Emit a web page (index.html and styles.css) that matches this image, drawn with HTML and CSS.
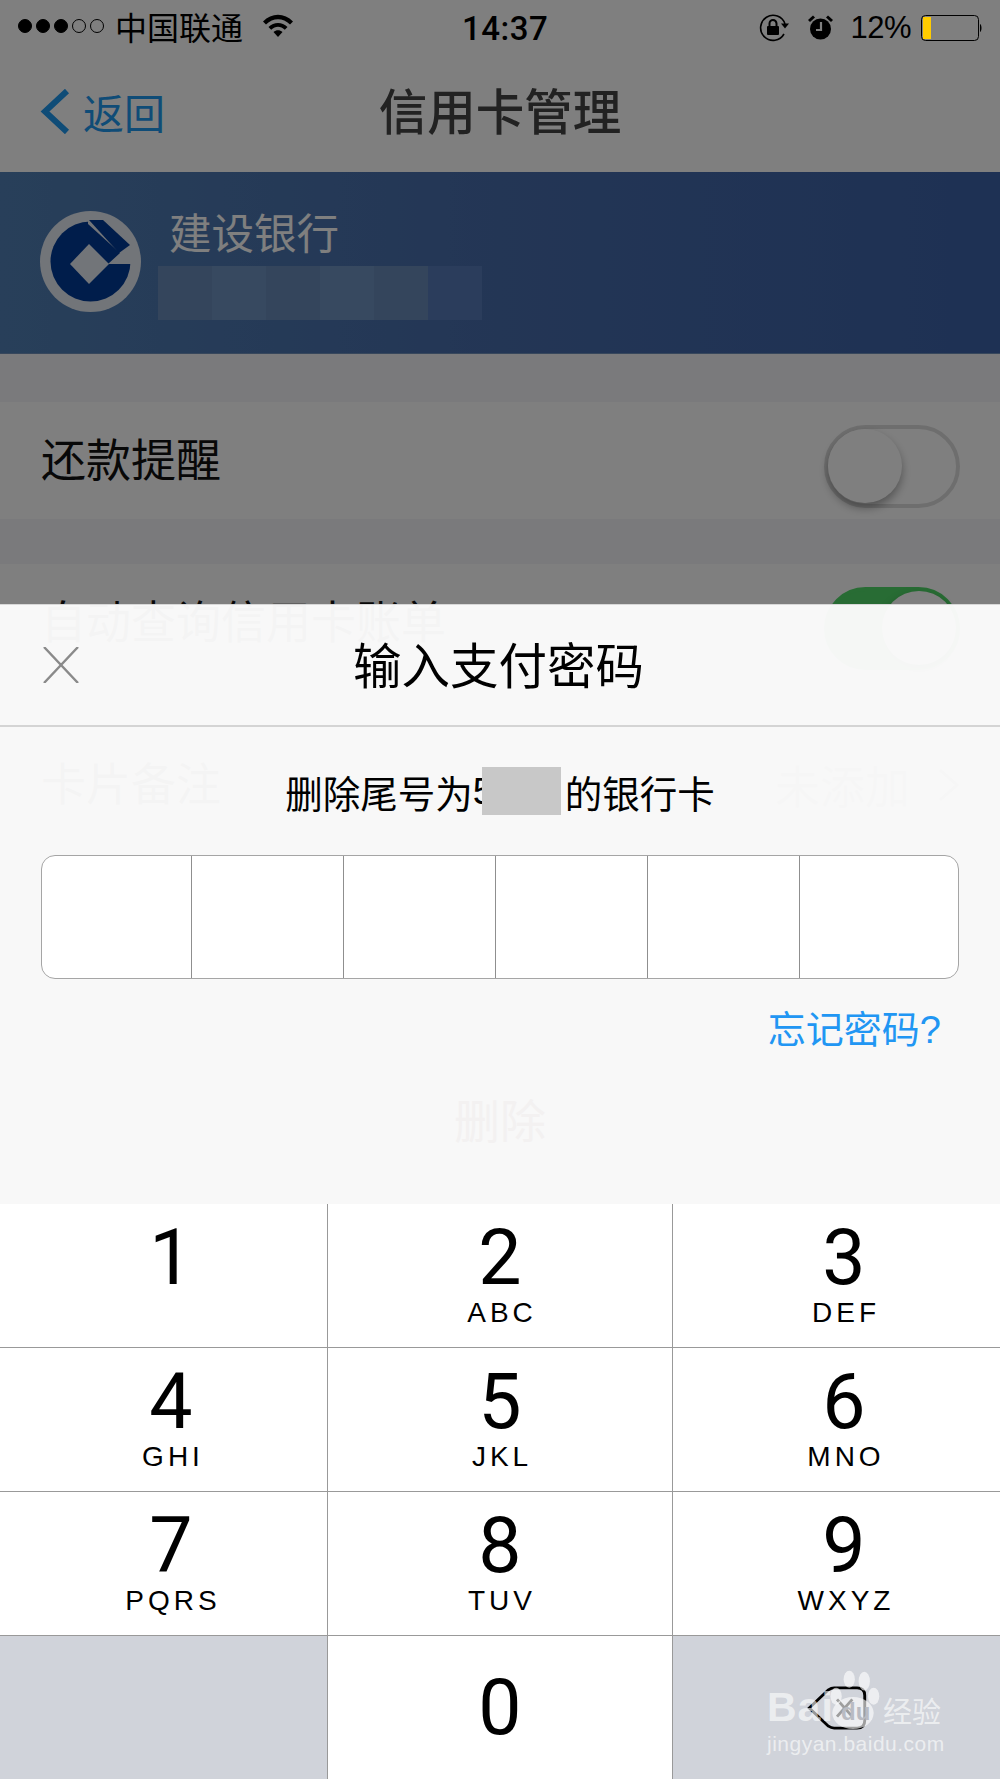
FILE: index.html
```html
<!DOCTYPE html>
<html>
    <head>
        <meta charset="UTF-8">
        <title>信用卡管理</title>
        <link rel="stylesheet" href="styles.css">
    </head>
    <body>
        <!-- 状态栏 -->
        <div class="status">
            <div class="status-left">
                <span class="dot on"></span><span class="dot on"></span><span class="dot on"></span><span class="dot"></span><span class="dot"></span>
                <span class="carrier">中国联通</span>
                <svg class="wifi" viewBox="0 0 32 24">
                    <path d="M1 8.500C9.500 -0.500 22.500 -0.500 31 8.500L28 11.500C21 4.500 11 4.500 4 11.500Z"/>
                    <path d="M6.500 14C12 8.500 20 8.500 25.500 14L22.800 16.800C18.500 12.800 13.500 12.800 9.200 16.800Z"/>
                    <path d="M11.500 19C14.200 16.500 17.800 16.500 20.500 19L16 24Z"/>
                </svg>
            </div>
            <div class="time">14:37</div>
            <div class="status-right">
                <svg class="rotate" viewBox="0 0 30 28">
                    <path d="M25 20A12.500 12.500 0 1 1 26 10" fill="none" stroke="#000" stroke-width="1.600"/>
                    <path d="M22 9.500L30 9.500L26 14.500Z"/>
                    <rect x="8" y="12" width="12" height="9" rx="1"/>
                    <path d="M10.500 12V9.500A3.500 3.500 0 0 1 17.500 9.500V12" fill="none" stroke="#000" stroke-width="2"/>
                </svg>
                <svg class="alarm" viewBox="0 0 25 25">
                    <circle cx="12.500" cy="14" r="10.500"/>
                    <path d="M1 6L6 1.500" stroke="#000" stroke-width="3"/>
                    <path d="M24 6L19 1.500" stroke="#000" stroke-width="3"/>
                    <path d="M13 7V15H8" fill="none" stroke="#808080" stroke-width="2.200"/>
                </svg>
                <span class="percent">12%</span>
                <svg class="battery" viewBox="0 0 61 26">
                    <rect x="0.500" y="0.500" width="57" height="25" rx="4" fill="none" stroke="#000"/>
                    <rect x="2" y="2" width="8" height="22" fill="#ffcc00"/>
                    <path d="M59 9C61 10 61 16 59 17Z"/>
                </svg>
            </div>
        </div>

        <div class="nav">
            <div class="back">
                <svg class="back-arrow" viewBox="0 0 30 45"><path d="M27 2L5 22.500L27 43" fill="none" stroke-width="6"/></svg>
                <span>返回</span>
            </div>
            <div class="nav-title">信用卡管理</div>
        </div>

        <div class="card">
            <svg class="logo" viewBox="0 0 101 101">
                <circle cx="50.500" cy="50.500" r="50.500" fill="#e4eaf2"/>
                <circle cx="50.500" cy="50.500" r="40" fill="#003a96"/>
                <path d="M48 13L80 42L68 53H92V30L80 12L62 6H48Z" fill="#e4eaf2"/>
                <path d="M49 9H63L90 34L79 42Z" fill="#003a96"/>
                <path d="M49 33L69 53L49 73L30 53Z" fill="#e4eaf2"/>
            </svg>
            <div class="card-info">
                <div class="bank-name">建设银行</div>
                <div class="card-no">
                    <span class="tile"></span><span class="tile light"></span><span class="tile"></span><span class="tile light"></span><span class="tile"></span><span class="tile faint"></span>
                </div>
            </div>
        </div>

        <div class="row first">
            <span class="label">还款提醒</span>
            <span class="switch"><span class="knob"></span></span>
        </div>
        <div class="row">
            <span class="label">自动查询信用卡账单</span>
            <span class="switch active"><span class="knob"></span></span>
        </div>
        <div class="row">
            <span class="label">卡片备注</span>
            <span class="row-value">未添加
                <svg class="row-arrow" viewBox="0 0 22 34"><path d="M2 2L19 17L2 32" fill="none" stroke-width="3"/></svg>
            </span>
        </div>

        <div class="mask"></div>

        <!-- 支付密码弹层 -->
        <div class="sheet">
            <div class="sheet-head">
                <svg class="close" viewBox="0 0 36 36"><path d="M1 0L35 36M35 0L1 36" fill="none" stroke-width="2.400"/></svg>
                <div class="sheet-title">输入支付密码</div>
            </div>
            <div class="message">删除尾号为<span class="masked">5<span class="blur"></span></span>的银行卡</div>
            <div class="code">
                <span></span><span></span><span></span><span></span><span></span><span></span>
            </div>
            <div class="forget">忘记密码?</div>
            <div class="del">删除</div>

            <div class="keypad">
                <div class="key pad-l"><div class="num">1</div></div>
                <div class="key"><div class="num">2</div><div class="abc">ABC</div></div>
                <div class="key pad-l end"><div class="num">3</div><div class="abc">DEF</div></div>
                <div class="key pad-l"><div class="num">4</div><div class="abc">GHI</div></div>
                <div class="key"><div class="num">5</div><div class="abc">JKL</div></div>
                <div class="key pad-l end"><div class="num">6</div><div class="abc">MNO</div></div>
                <div class="key pad-l"><div class="num">7</div><div class="abc">PQRS</div></div>
                <div class="key"><div class="num">8</div><div class="abc">TUV</div></div>
                <div class="key pad-l end"><div class="num">9</div><div class="abc">WXYZ</div></div>
                <div class="key gray"></div>
                <div class="key zero"><div class="num">0</div></div>
                <div class="key gray end del-key">
                    <svg class="backspace" viewBox="0 0 62 46">
                        <path d="M2 23L22 4Q25 2 28 2H52Q60 2 60 10V36Q60 44 52 44H28Q25 44 22 42Z" fill="none" stroke="#000" stroke-width="3"/>
                        <path d="M31 14L47 32M47 14L31 32" fill="none" stroke="#000" stroke-width="3"/>
                    </svg>
                </div>
            </div>
        </div>

        <!-- 水印 -->
        <div class="mark">
            <div class="mark-top">
                <span class="mark-bai">Bai</span>
                <span class="paw">
                    <svg viewBox="0 0 56 66">
                        <ellipse cx="10" cy="30" rx="6" ry="9"/>
                        <ellipse cx="24" cy="12" rx="6" ry="9"/>
                        <ellipse cx="40" cy="14" rx="6" ry="10"/>
                        <ellipse cx="50" cy="30" rx="6" ry="9"/>
                        <ellipse cx="28" cy="48" rx="22" ry="17"/>
                    </svg>
                    <span class="mark-du">du</span>
                </span>
                <span class="mark-jy">经验</span>
            </div>
            <div class="mark-url">jingyan.baidu.com</div>
        </div>
    </body>
</html>
```

FILE: styles.css
```css
html{
    background-color: #f4f4f8;
}
body{
    margin: 0;
    height: 1779px;
    overflow: hidden;
    position: relative;
    font-family: "Liberation Sans","Noto Sans CJK SC",sans-serif;
    color: #000;
}

/* 状态栏在遮罩之上 */
.status{
    position: relative;
    z-index: 3;
    height: 52px;
    display: flex;
    align-items: center;
    padding: 0 18px;
}
.status-left{
    width: 444px;
    display: flex;
    align-items: center;
}
.dot{
    width: 14px;
    height: 14px;
    margin-right: 4px;
    border-radius: 50%;
    border: 1px solid #000;
    box-sizing: border-box;
}
.dot.on{
    background-color: #000;
}
.carrier{
    font-size: 32px;
    line-height: 40px;
    margin-left: 7px;
    padding-top: 5px;
}
.wifi{
    width: 32px;
    height: 24px;
    margin-left: 19px;
    margin-top: -2px;
}
.time{
    font-family: Roboto,"Liberation Sans",sans-serif;
    font-weight: 500;
    font-size: 33px;
    letter-spacing: 0.5px;
    padding-top: 4px;
}
.status-right{
    margin-left: auto;
    display: flex;
    align-items: center;
    padding-top: 3px;
}
.rotate{
    width: 30px;
    height: 28px;
}
.alarm{
    width: 25px;
    height: 25px;
    margin-left: 19px;
}
.percent{
    font-size: 31px;
    margin-left: 17px;
    letter-spacing: -0.5px;
}
.battery{
    width: 61px;
    height: 26px;
    margin-left: 10px;
}

.nav{
    height: 172px;
    box-sizing: border-box;
    background-color: #fff;
    margin-top: -52px;
    padding: 52px 40px 0;
    display: grid;
    grid-template-columns: 1fr auto 1fr;
    align-items: center;
}
.back{
    display: flex;
    align-items: center;
    color: #1f98ee;
    font-size: 41px;
    margin-top: -2px;
}
.back-arrow{
    width: 30px;
    height: 45px;
    margin-right: 13px;
    stroke: #1f98ee;
}
.nav-title{
    font-size: 48.500px;
    font-weight: 500;
    color: #444;
    margin-top: -6px;
}

.card{
    height: 181px;
    display: flex;
    padding-left: 40px;
    background: linear-gradient(90deg,#507fb4,#476cab 50%,#3c62a8);
    border-bottom: 1px solid #6f8fb8;
}
.logo{
    width: 101px;
    height: 101px;
    margin-top: 39px;
}
.card-info{
    margin-left: 17px;
}
.bank-name{
    font-size: 42.500px;
    line-height: 50px;
    color: #fff;
    margin-top: 38px;
    padding-left: 11px;
}
.card-no{
    display: flex;
    margin-top: 6px;
}
.tile{
    width: 54px;
    height: 54px;
    background-color: #688ab8;
}
.tile.light{
    background-color: #6e92c0;
}
.tile.faint{
    background-color: #567ab8;
}

.row{
    height: 117px;
    margin-top: 45px;
    padding: 0 40px 0 41px;
    background-color: #fff;
    display: flex;
    align-items: center;
    justify-content: space-between;
    font-size: 45px;
    color: #111;
}
.row.first{
    margin-top: 48px;
}
.label{
    margin-top: -6px;
}
.switch{
    width: 136px;
    height: 83px;
    margin-top: 11px;
    box-sizing: border-box;
    border: 4px solid #ddd;
    border-radius: 42px;
    background-color: #fff;
}
.switch.active{
    background-color: #50d868;
    border-color: #50d868;
}
.knob{
    display: block;
    width: 74px;
    height: 74px;
    border-radius: 50%;
    background-color: #fff;
    box-shadow: 0 5px 10px rgba(0,0,0,0.35);
}
.switch.active .knob{
    margin-left: 54px;
}
.row-value{
    color: #999;
    display: flex;
    align-items: center;
}
.row-arrow{
    width: 22px;
    height: 34px;
    margin-left: 28px;
    stroke: #888;
}

.mask{
    position: absolute;
    left: 0;
    top: 0;
    right: 0;
    bottom: 0;
    z-index: 2;
    background-color: rgba(0,0,0,0.5);
}

.sheet{
    position: absolute;
    left: 0;
    right: 0;
    top: 604px;
    bottom: 0;
    z-index: 4;
    display: flex;
    flex-direction: column;
    background-color: rgba(252,252,252,0.97);
    border-top: 1px solid #d8d8d8;
}
.sheet-head{
    height: 122px;
    flex: none;
    box-sizing: border-box;
    border-bottom: 2px solid #d4d4d4;
    display: grid;
    grid-template-columns: 1fr auto 1fr;
    align-items: center;
    padding-left: 43px;
    padding-right: 46px;
}
.close{
    width: 36px;
    height: 36px;
    stroke: #8a8a8a;
}
.sheet-title{
    font-size: 48.500px;
    margin-top: -4px;
}
.message{
    height: 128px;
    flex: none;
    display: flex;
    justify-content: center;
    align-items: center;
    font-size: 37.500px;
}
.masked{
    width: 92px;
    position: relative;
}
.blur{
    position: absolute;
    left: 9px;
    top: -3px;
    width: 79px;
    height: 48px;
    background-color: #c8c8c8;
}
.code{
    flex: none;
    height: 124px;
    box-sizing: border-box;
    margin: 0 41px;
    border: 1px solid #a5a5a5;
    border-radius: 14px;
    background-color: #fff;
    display: grid;
    grid-template-columns: 150px repeat(4,152px) 1fr;
}
.code span{
    border-right: 1px solid #8f8f8f;
}
.code span:last-child{
    border-right: none;
}
.forget{
    flex: none;
    margin-top: 28px;
    padding-right: 59px;
    text-align: right;
    font-size: 38px;
    line-height: 46px;
    color: #2196f3;
}
.del{
    flex: none;
    height: 109px;
    margin-top: 10px;
    display: flex;
    align-items: center;
    justify-content: center;
    font-size: 46px;
    color: #f3f1f1;
}

.keypad{
    flex: none;
    margin-top: auto;
    height: 575px;
    display: grid;
    grid-template-columns: 328px 345px 1fr;
    grid-template-rows: repeat(3,144px) 143px;
    background-color: #fff;
}
.key{
    box-sizing: border-box;
    display: flex;
    flex-direction: column;
    align-items: center;
    padding-top: 16px;
    border-right: 1px solid #999;
    border-bottom: 1px solid #999;
    background-color: #fff;
}
.key.end{
    border-right: none;
}
.key:nth-child(n+10){
    border-bottom: none;
}
.key.pad-l{
    padding-left: 15px;
}
.key.gray{
    background-color: #d0d3da;
}
.key.zero{
    justify-content: center;
    padding-top: 0;
}
.key.del-key{
    padding-top: 50px;
}
.num{
    font-family: Roboto,"Liberation Sans",sans-serif;
    font-size: 77px;
    line-height: 76px;
}
.abc{
    font-size: 28px;
    line-height: 28px;
    letter-spacing: 4px;
    padding-left: 4px;
    margin-top: 3px;
}
.backspace{
    width: 60px;
    height: 44px;
}

.mark{
    position: absolute;
    left: 767px;
    top: 1668px;
    width: 190px;
    z-index: 5;
    color: rgba(255,255,255,0.62);
}
.mark-top{
    display: flex;
    align-items: flex-end;
    height: 62px;
}
.mark-bai{
    font-size: 41px;
    font-weight: bold;
    line-height: 46px;
    letter-spacing: 1px;
    width: 58px;
}
.paw{
    width: 56px;
    height: 62px;
    position: relative;
}
.paw svg{
    width: 56px;
    height: 62px;
    fill: rgba(255,255,255,0.62);
}
.mark-du{
    position: absolute;
    left: 16px;
    bottom: 4px;
    font-size: 24px;
    font-weight: bold;
    color: #b9bbc2;
}
.mark-jy{
    font-size: 29px;
    line-height: 34px;
    margin-left: 2px;
}
.mark-url{
    font-size: 21px;
    line-height: 26px;
    letter-spacing: 0.5px;
    margin-top: 1px;
}
```
